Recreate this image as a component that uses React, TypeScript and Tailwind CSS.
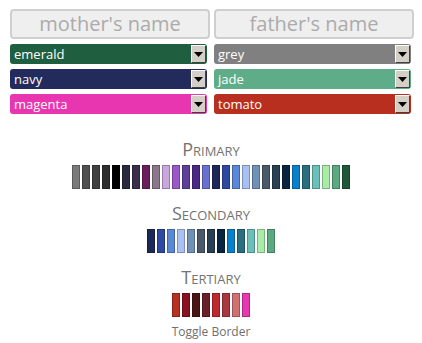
import React from 'react';

const primary = [
  '#7a7a7a', '#505050', '#404040', '#2e2e2e', '#000000', '#2a2a3e', '#3a2e48',
  '#6a1e5a', '#8a7888', '#c8a8dc', '#9a58c8', '#5e3e98', '#4a2888', '#6a70d0',
  '#1e2858', '#2e4aa0', '#5a88d8', '#a8c0f4', '#7090b8', '#4a5a6a', '#2a3e54',
  '#0a2440', '#0a80cc', '#2a6e80', '#6ac0b8', '#a8eca8', '#5aaa80', '#1e5a38',
];

const secondary = [
  '#1e2858', '#2e4aa0', '#5a88d8', '#a8c0f4', '#7090b8', '#4a5a6a', '#2a3e54',
  '#0a2440', '#0a80cc', '#2a6e80', '#6ac0b8', '#a8eca8', '#5aaa80',
];

const tertiary = ['#b83020', '#8a1020', '#4a1414', '#6a2028', '#c02830', '#a83840', '#d07070', '#e838b0'];

const font = { fontFamily: '"Open Sans", "DejaVu Sans", sans-serif' };

function NameInput({ placeholder }: { placeholder: string }) {
  return (
    <div className="h-[30px] w-[200px] rounded-[4px] border-2 border-[#cfcfcf] bg-[#efefef] flex items-center justify-center text-[20px] text-[#ababab] leading-none">
      {placeholder}
    </div>
  );
}

function ColorSelect({ label, color }: { label: string; color: string }) {
  return (
    <div
      className="mt-[5px] h-[20px] w-[197px] rounded-[3px] flex items-center justify-between pl-[4px] pr-[1px] text-[13px] text-white leading-none"
      style={{ background: color }}
    >
      <span>{label}</span>
      <div className="h-[18px] w-[15px] bg-[#d4d0c8] border-t border-l border-t-white border-l-white border-r border-b border-r-[#404040] border-b-[#404040] flex items-center justify-center">
        <svg width="9" height="5" viewBox="0 0 9 5">
          <path d="M0 0h9L4.5 5z" fill="#000" />
        </svg>
      </div>
    </div>
  );
}

function Palette({ title, colors }: { title: string; colors: string[] }) {
  return (
    <div className="flex flex-col items-center">
      <div className="h-[24px] text-[18px] font-medium leading-[16px] text-[#737373] [font-variant:small-caps]">
        {title}
      </div>
      <div className="flex gap-[2px]">
        {colors.map((c, i) => (
          <div key={i} className="h-[24px] w-[8px] border border-black/25" style={{ background: c }} />
        ))}
      </div>
    </div>
  );
}

export default function App() {
  return (
    <div className="w-[422px] h-[343px] bg-white pt-[9px] px-[10px]" style={font}>
      {/* Parent names and colours */}
      <div className="flex gap-[4px]">
        <div className="flex flex-col">
          <NameInput placeholder="mother's name" />
          <ColorSelect label="emerald" color="#1f5f3f" />
          <ColorSelect label="navy" color="#232a5c" />
          <ColorSelect label="magenta" color="#e836b0" />
        </div>
        <div className="flex flex-col">
          <NameInput placeholder="father's name" />
          <ColorSelect label="grey" color="#808080" />
          <ColorSelect label="jade" color="#5fad88" />
          <ColorSelect label="tomato" color="#b82f1f" />
        </div>
      </div>

      {/* Palettes */}
      <div className="mt-[27px] flex flex-col gap-[16px]">
        <Palette title="Primary" colors={primary} />
        <Palette title="Secondary" colors={secondary} />
        <div className="flex flex-col items-center">
          <Palette title="Tertiary" colors={tertiary} />
          <div className="mt-[6px] text-[12px] text-[#707070]">Toggle Border</div>
        </div>
      </div>
    </div>
  );
}
